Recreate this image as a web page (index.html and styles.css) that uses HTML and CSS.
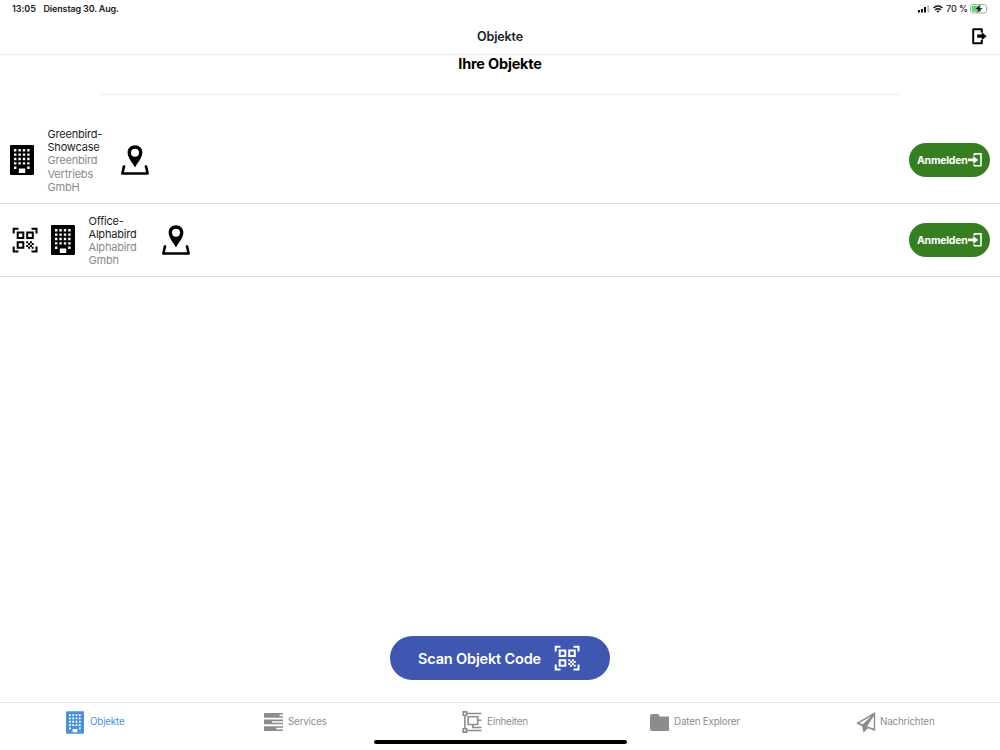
FILE: index.html
```html
<!DOCTYPE html>
<html lang="de">
<head>
<meta charset="utf-8">
<title>Objekte</title>
<link rel="stylesheet" href="styles.css">
</head>
<body>
<svg width="0" height="0" class="defs">
  <symbol id="building" viewBox="0 0 24 30"><path fill="currentColor" fill-rule="evenodd" d="M1 0H23Q24 0 24 1V29Q24 30 23 30H1Q0 30 0 29V1Q0 0 1 0ZM4 4v2.400h2.400V4zM8.400 4v2.400h2.400V4zM12.800 4v2.400h2.400V4zM17.200 4v2.400h2.400V4zM4 8.400v2.400h2.400V8.400zM8.400 8.400v2.400h2.400V8.400zM12.800 8.400v2.400h2.400V8.400zM17.200 8.400v2.400h2.400V8.400zM4 12.800v2.400h2.400v-2.400zM8.400 12.800v2.400h2.400v-2.400zM12.800 12.800v2.400h2.400v-2.400zM17.200 12.800v2.400h2.400v-2.400zM4 17.200v2.400h2.400v-2.400zM8.400 17.200v2.400h2.400v-2.400zM12.800 17.200v2.400h2.400v-2.400zM17.200 17.200v2.400h2.400v-2.400zM4 21.600v2.400h2.400v-2.400zM17.200 21.600v2.400h2.400v-2.400zM8.800 23.500V28h6.400v-4.500z"/></symbol>
  <symbol id="qr" viewBox="0 0 26 26"><g fill="none" stroke="currentColor" stroke-width="2"><path d="M1.700 6.500V1.700H6.500M19.500 1.700H24.500V6.500M1.700 19.500V24.500H6.500M19.500 24.500H24.500V19.500"/><path d="M5.700 5.500h5.600v5.600H5.700zM15.200 5.500h5.600v5.600h-5.600zM5.700 15.200h5.600v5.600H5.700z"/></g><path fill="currentColor" d="M14.200 14.200h2v2h-2zM17.900 14.200h2v2h-2zM16.100 16.100h2v2h-2zM19.700 16.100h2v2h-2zM14.200 17.900h2v2h-2zM17.900 17.900h2v2h-2zM16.100 19.700h2v2h-2zM19.700 19.700h2v2h-2z"/></symbol>
  <symbol id="place" viewBox="0 0 28 30"><path fill="currentColor" fill-rule="evenodd" d="M14 .3C9.800 .3 6.600 3.400 6.600 7.500C6.600 12.500 10.700 16.500 14 22.500C17.300 16.500 21.400 12.500 21.400 7.500C21.400 3.400 18.200 .3 14 .3ZM14 3.700a4 4 0 1 1 0 8a4 4 0 1 1 0-8Z"/><path fill="none" stroke="currentColor" stroke-width="2.600" stroke-linejoin="round" d="M4.200 21.500H2.900L1.400 28.500H26.600L25.100 21.500H23.800"/></symbol>
</svg>
<div class="screen">
  <div class="status">
    <span class="time">13:05</span><span class="date">Dienstag 30. Aug.</span>
    <svg class="signal" width="12" height="8" viewBox="0 0 12 8"><path fill="#111" d="M0 5h2v2.500H0zM3 4h2v3.500H3zM6 2h2v5.500H6z"/><path fill="#bbb" d="M9.300.5h2v7h-2z"/></svg>
    <svg class="wifi" width="10" height="8" viewBox="0 0 10 8"><path fill="none" stroke="#111" stroke-width="1.500" d="M.5 3Q5-1 9.500 3M2.200 4.900Q5 2.500 7.800 4.900"/><path fill="#111" d="M3.400 6L5 7.700L6.600 6Q5 4.800 3.400 6Z"/></svg>
    <span class="percent">70 %</span>
    <svg class="battery" width="19" height="10" viewBox="0 0 19 10"><rect x=".5" y=".5" width="16" height="8.500" rx="2.500" fill="#fff" stroke="#aaa"/><path fill="#5bd769" d="M3 1.700h8v6H3q-1.300 0-1.300-1.200V3Q1.700 1.700 3 1.700Z"/><path fill="#aaa" d="M17.600 3.300q1.400 1.400 0 2.900z"/><path fill="#111" stroke="#fff" stroke-width=".4" d="M10.700.1L4.600 5.600H8L6.500 9.700L13 4.100H9.600Z"/></svg>
  </div>
  <header class="navbar">
    <span></span><h1>Objekte</h1>
    <svg class="logout" width="15" height="17" viewBox="0 0 15 17"><path fill="none" stroke="#000" stroke-width="2" stroke-linejoin="round" d="M9.800 4.400V1.200H1.200V15.200H9.800V12"/><path fill="#000" d="M5.200 6.600H9.800V4.200L14.600 8.200L9.800 12.200V9.800H5.200Z"/></svg>
  </header>
  <h2>Ihre Objekte</h2>
  <div class="rule"></div>
  <main class="list">
    <section class="row first">
      <svg class="building"><use href="#building"/></svg>
      <div class="names"><div>Greenbird-<br>Showcase</div><div class="company">Greenbird<br>Vertriebs<br>GmbH</div></div>
      <svg class="place"><use href="#place"/></svg>
      <button class="login"><span>Anmelden</span><svg width="14" height="14" viewBox="0 0 14 14"><path fill="none" stroke="#fff" stroke-width="1.600" stroke-linejoin="round" d="M6.300 2.400V.9H13V12.700H6.300V11.200"/><path fill="#fff" d="M0 5.500H5.200V3L10.200 6.900L5.200 10.700V8.200H0Z"/></svg></button>
    </section>
    <section class="row second">
      <svg class="qr"><use href="#qr"/></svg>
      <svg class="building"><use href="#building"/></svg>
      <div class="names"><div>Office-<br>Alphabird</div><div class="company">Alphabird<br>Gmbh</div></div>
      <svg class="place"><use href="#place"/></svg>
      <button class="login"><span>Anmelden</span><svg width="14" height="14" viewBox="0 0 14 14"><path fill="none" stroke="#fff" stroke-width="1.600" stroke-linejoin="round" d="M6.300 2.400V.9H13V12.700H6.300V11.200"/><path fill="#fff" d="M0 5.500H5.200V3L10.200 6.900L5.200 10.700V8.200H0Z"/></svg></button>
    </section>
  </main>
  <button class="scan"><span>Scan Objekt Code</span><svg class="qr"><use href="#qr"/></svg></button>
  <nav class="tabs">
    <a class="tab active"><svg width="18" height="23"><use href="#building"/></svg><span>Objekte</span></a>
    <a class="tab services"><svg width="19" height="18" viewBox="0 0 19 18"><path fill="currentColor" fill-rule="evenodd" d="M0 0h19v4.700H0zM15.500 1.500v1.700H19V1.500zM0 6.600h19v4.700H0zM8 8.200v1.600h11V8.200zM0 13.200h19v4.700H0zM12.500 14.800v1.600H19v-1.600z"/></svg><span>Services</span></a>
    <a class="tab units"><svg width="20" height="22" viewBox="0 0 20 22"><g fill="none" stroke="currentColor" stroke-width="1.600"><path d="M1.200.9h3.400v3.400H1.200zM1.200 17.700h3.400v3.400H1.200zM2.900 4.300v13.400M4.600 2.500H19.500M4.600 19.500H19.500M6.200 5.800h9.500v7.700H6.200zM15.700 9.300H19.500M10.800 13.500v3H19.500"/></g></svg><span>Einheiten</span></a>
    <a class="tab data"><svg width="19" height="17" viewBox="0 0 19 17"><path fill="currentColor" d="M2 0H7Q8.500 0 9 1L9.700 2.500H18Q19 2.500 19 3.500V16Q19 17 18 17H2Q0 17 0 15V2Q0 0 2 0Z"/></svg><span>Daten Explorer</span></a>
    <a class="tab news"><svg width="20" height="21" viewBox="0 0 20 21"><path fill="currentColor" fill-rule="evenodd" d="M19.200 0V19L12 16.200L7.500 20.700L6 14L0 11.300ZM15 4.200L3.400 11L6.800 12.300ZM17.900 4L11 14.200L17.700 16.600Z"/></svg><span>Nachrichten</span></a>
  </nav>
  <div class="home-indicator"></div>
</div>
</body>
</html>
```
FILE: styles.css
```css
* { box-sizing: border-box; }
body { margin: 0; background: #fff; color: #000; font-family: Inter, "Liberation Sans", sans-serif; }
svg { display: block; flex: none; }
.defs { position: absolute; }
h1, h2 { margin: 0; text-align: center; }
button { border: 0; font-family: inherit; color: #fff; padding: 0; white-space: nowrap; }
.screen { height: 750px; display: flex; flex-direction: column; overflow: hidden; }
.status { height: 19px; flex: none; display: flex; align-items: center; padding: 0 11px 1px 12px; font-size: 9px; font-weight: 600; color: #222; white-space: nowrap; }
.status span { padding-bottom: 1px; }
.time { width: 31.5px; letter-spacing: -.05px; }
.date { margin-right: auto; letter-spacing: -.15px; }
.wifi { margin: 0 3px 0 3px; }
.percent { width: 24px; font-weight: 500; letter-spacing: -.1px; }
.navbar { height: 36px; flex: none; display: grid; grid-template-columns: 1fr auto 1fr; align-items: center; border-bottom: 1px solid #ebebeb; padding: 0 13px 1px; }
h1 { padding-top: 2px; font-size: 12.500px; line-height: 18px; font-weight: 600; color: #1c1c1e; letter-spacing: -.12px; }
.logout { justify-self: end; }
h2 { height: 17px; font-size: 14.500px; line-height: 17px; font-weight: 700; letter-spacing: -.2px; }
.rule { width: 800px; height: 1px; flex: none; margin: 22px auto; background: #eee; }
.row { display: flex; align-items: center; padding: 0 10px; border-bottom: 1px solid #ddd; }
.first { height: 87px; }
.second { height: 73px; padding-left: 12px; }
.building { width: 24px; height: 30px; }
.row .qr { width: 26px; height: 26px; margin-right: 13px; }
.names { width: 60px; margin-left: 13.500px; padding-top: 2px; font-size: 11px; line-height: 13.200px; letter-spacing: -.2px; color: #222; white-space: nowrap; }
.company { color: #8a8a8a; }
.place { width: 28px; height: 30px; margin-left: 13.500px; }
.login { width: 81px; height: 34px; margin-left: auto; border-radius: 17px; background: #377e22; display: flex; align-items: center; padding-left: 8px; font-size: 10.500px; font-weight: 700; letter-spacing: -.25px; }
.login span { width: 51px; text-align: left; }
.scan { width: 220px; height: 44px; margin: auto auto 22px; flex: none; display: flex; align-items: center; gap: 14px; padding-left: 28px; border-radius: 22px; background: #3f57b1; font-size: 14.500px; font-weight: 600; letter-spacing: -.16px; }
.scan span { width: 122px; text-align: left; }
.scan .qr { width: 26px; height: 26px; }
.tabs { height: 37px; flex: none; display: grid; grid-template-columns: repeat(5, 1fr); border-top: 1px solid #e5e5e5; }
.tab { display: flex; align-items: center; gap: 6px; padding: 0 0 0 66px; color: #8c8c8c; font-size: 9.800px; letter-spacing: -.18px; white-space: nowrap; height: 37px; }
.tab.active { color: #4c90d7; }
.tab.services { padding-left: 64px; gap: 5px; }
.tab.units { padding-left: 62px; gap: 5px; }
.tab.data { padding-left: 50px; gap: 5px; }
.tab.news { padding-left: 56px; gap: 4px; }
.tab svg { margin-top: 1px; }
.home-indicator { width: 253px; height: 4px; flex: none; margin: 1px auto 6px; border-radius: 2px; background: #000; }
```
